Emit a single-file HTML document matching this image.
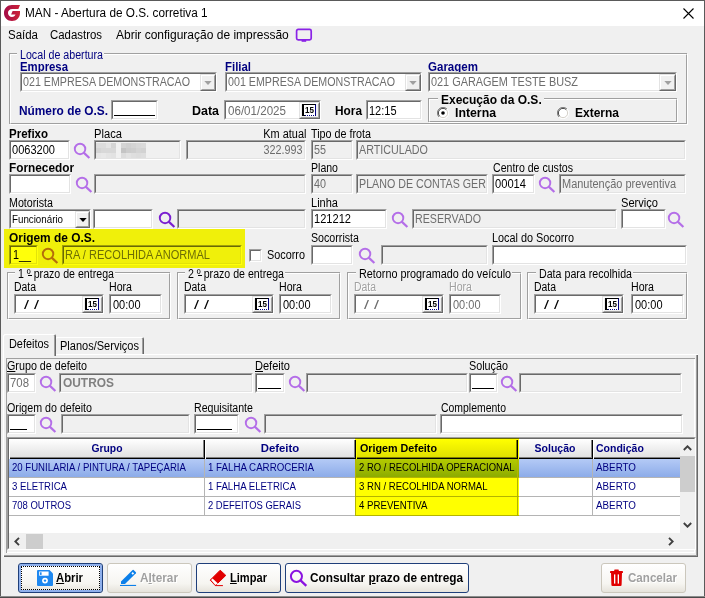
<!DOCTYPE html>
<html lang="pt-BR"><head><meta charset="utf-8"><title>MAN - Abertura de O.S. corretiva 1</title>
<style>
html,body{margin:0;padding:0;background:#f0f0f0;overflow:hidden}
#w{position:relative;width:705px;height:598px;overflow:hidden;font-family:"Liberation Sans",sans-serif;font-size:12px}
#w div,#w svg.a,#w span.t{position:absolute}
#w span.t{white-space:nowrap;transform-origin:0 0;display:block}
#w span.t.r{transform-origin:100% 0}
#w span.t.c{transform-origin:50% 0}
.sk{box-sizing:border-box;border:1px solid;border-color:#a0a0a0 #fff #fff #a0a0a0}
.sk i{position:absolute;left:0;top:0;right:0;bottom:0;border:1px solid;border-color:#696969 #e3e3e3 #e3e3e3 #696969}
.rb{box-sizing:border-box;background:#f0f0f0;border:1px solid;border-color:#e3e3e3 #696969 #696969 #e3e3e3}
.rb i{position:absolute;left:0;top:0;right:0;bottom:0;border:1px solid;border-color:#fff #a0a0a0 #a0a0a0 #fff}
.gb{box-sizing:border-box;border:1px solid #a0a0a0;box-shadow:1px 1px 0 #fff}
.gb i{position:absolute;left:0;top:0;right:-1px;bottom:-1px;border:1px solid;border-color:#fff transparent transparent #fff}
u{text-decoration:underline}
</style></head>
<body><div id="w">
<div style="left:0px;top:0px;width:705px;height:598px;background:#f0f0f0"></div>
<div style="left:0px;top:0px;width:705px;height:26px;background:#fff"></div>
<div style="left:0px;top:0px;width:705px;height:1px;background:#5a5a5a"></div>
<div style="left:0px;top:0px;width:1px;height:598px;background:#5a5a5a"></div>
<div style="left:704px;top:0px;width:1px;height:598px;background:#5a5a5a"></div>
<div style="left:0px;top:596px;width:705px;height:1px;background:#8c8c8c"></div>
<div style="left:0px;top:597px;width:705px;height:1px;background:#4a4a4a"></div>
<svg class="a" style="left:4px;top:5px" width="16" height="16" viewBox="0 0 16 16"><defs><linearGradient id="lg" x1="0" y1="0" x2="1" y2="0"><stop offset="0" stop-color="#a30c48"/><stop offset="1" stop-color="#cc2238"/></linearGradient></defs><path d="M16 0 L14.4 4.1 L8.2 4.1 C5.6 4.1 4 5.8 4 8 C4 10.3 5.7 12 8 12 C9.8 12 11 11.1 11.5 9.6 L7.1 9.6 L8.6 6.1 L16 6.1 L16 8 C16 12.6 12.6 16 8 16 C3.4 16 0 12.6 0 8 C0 3.4 3.4 0 8 0 Z" fill="url(#lg)"/></svg>
<span class="t" id="t0" style="top:6px;font-size:12px;line-height:15px;color:#000;left:25px;transform:scaleX(0.981);">MAN - Abertura de O.S. corretiva 1</span>
<svg class="a" style="left:683px;top:8px" width="11" height="11" viewBox="0 0 11 11"><path d="M0.5 0.5 L10.5 10.5 M10.5 0.5 L0.5 10.5" stroke="#000" stroke-width="1.1"/></svg>
<span class="t" id="t1" style="top:28px;font-size:12px;line-height:15px;color:#000;left:8px;transform:scaleX(0.957);">Saída</span>
<span class="t" id="t2" style="top:28px;font-size:12px;line-height:15px;color:#000;left:50px;transform:scaleX(0.951);">Cadastros</span>
<span class="t" id="t3" style="top:28px;font-size:12px;line-height:15px;color:#000;left:116px;">Abrir configuração de impressão</span>
<svg class="a" style="left:295px;top:28px" width="18" height="15" viewBox="0 0 18 15"><rect x="1.6" y="1.4" width="14.6" height="10.4" rx="1.6" fill="none" stroke="#8a22e6" stroke-width="1.7"/><rect x="6.6" y="12" width="4.6" height="1.8" fill="#8a22e6"/></svg>
<div class="gb" style="left:9px;top:53px;width:678px;height:71px"><i></i></div>
<div style="left:17px;top:52px;width:87px;height:3px;background:#f0f0f0"></div>
<span class="t" id="t4" style="top:49px;font-size:12px;line-height:13px;color:#000080;left:20px;transform:scaleX(0.889);">Local de abertura</span>
<span class="t" id="t5" style="top:61px;font-size:12px;line-height:13px;color:#000080;font-weight:bold;left:20px;transform:scaleX(0.947);">Empresa</span>
<div class="sk" style="left:20px;top:72px;width:197px;height:20px;background:#fff"><i></i></div>
<span class="t" id="t6" style="top:76px;font-size:12px;line-height:13px;color:#6d6d6d;left:23px;transform:scaleX(0.891);">021 EMPRESA DEMONSTRACAO</span>
<div class="rb" style="left:200px;top:74px;width:16px;height:17px"><i></i></div>
<svg class="a" style="left:204.0px;top:80.5px" width="8" height="4" viewBox="0 0 8 4"><path d="M0.3 0 L7.7 0 L4 4 Z" fill="#a0a0a0"/></svg>
<span class="t" id="t7" style="top:61px;font-size:12px;line-height:13px;color:#000080;font-weight:bold;left:225px;transform:scaleX(0.951);">Filial</span>
<div class="sk" style="left:225px;top:72px;width:197px;height:20px;background:#fff"><i></i></div>
<span class="t" id="t8" style="top:76px;font-size:12px;line-height:13px;color:#6d6d6d;left:228px;transform:scaleX(0.891);">001 EMPRESA DEMONSTRACAO</span>
<div class="rb" style="left:405px;top:74px;width:16px;height:17px"><i></i></div>
<svg class="a" style="left:409.0px;top:80.5px" width="8" height="4" viewBox="0 0 8 4"><path d="M0.3 0 L7.7 0 L4 4 Z" fill="#a0a0a0"/></svg>
<span class="t" id="t9" style="top:61px;font-size:12px;line-height:13px;color:#000080;font-weight:bold;left:428px;transform:scaleX(0.961);">Garagem</span>
<div class="sk" style="left:428px;top:72px;width:249px;height:20px;background:#fff"><i></i></div>
<span class="t" id="t10" style="top:76px;font-size:12px;line-height:13px;color:#6d6d6d;left:431px;transform:scaleX(0.908);">021 GARAGEM TESTE BUSZ</span>
<div class="rb" style="left:659px;top:74px;width:17px;height:17px"><i></i></div>
<svg class="a" style="left:663.5px;top:80.5px" width="8" height="4" viewBox="0 0 8 4"><path d="M0.3 0 L7.7 0 L4 4 Z" fill="#a0a0a0"/></svg>
<span class="t" id="t11" style="top:105px;font-size:12px;line-height:13px;color:#000080;font-weight:bold;left:19px;transform:scaleX(0.989);">Número de O.S.</span>
<div class="sk" style="left:111px;top:100px;width:47px;height:20px;background:#fff"><i></i></div>
<div style="left:114px;top:115px;width:41px;height:1px;background:#000"></div>
<span class="t" id="t12" style="top:105px;font-size:12px;line-height:13px;color:#000;font-weight:bold;left:192px;transform:scaleX(1.038);">Data</span>
<div class="sk" style="left:224px;top:100px;width:97px;height:20px;background:#fff"><i></i></div>
<span class="t" id="t13" style="top:105px;font-size:12px;line-height:13px;color:#6d6d6d;left:228px;transform:scaleX(0.966);">06/01/2025</span>
<div class="rb" style="left:299px;top:102px;width:21px;height:17px"><i></i></div>
<div style="left:302px;top:104px;width:14px;height:12px;background:#fff;border-style:solid;border-color:#000 #000080 #000080 #000;border-width:1px 1px 1px 2px;border-bottom-style:dotted;box-sizing:border-box"></div>
<div style="left:302px;top:115px;width:3px;height:1px;background:#000"></div>
<span class="t" id="t14" style="top:104.5px;font-size:9.5px;line-height:10px;color:#000;font-weight:bold;left:305px;transform:scaleX(0.851);">15</span>
<span class="t" id="t15" style="top:105px;font-size:12px;line-height:13px;color:#000;font-weight:bold;left:335px;transform:scaleX(0.987);">Hora</span>
<div class="sk" style="left:366px;top:100px;width:56px;height:20px;background:#fff"><i></i></div>
<span class="t" id="t16" style="top:105px;font-size:12px;line-height:13px;color:#000;left:369px;transform:scaleX(0.916);">12:15</span>
<div class="gb" style="left:428px;top:98px;width:249px;height:24px"><i></i></div>
<div style="left:438px;top:97px;width:106px;height:3px;background:#f0f0f0"></div>
<span class="t" id="t17" style="top:94px;font-size:12px;line-height:13px;color:#000;font-weight:bold;left:441px;">Execução da O.S.</span>
<svg class="a" style="left:437px;top:107px" width="12" height="12" viewBox="0 0 12 12"><circle cx="6" cy="6" r="5.5" fill="#fff"/><path d="M10 2 A5.6 5.6 0 0 0 2 10" fill="none" stroke="#808080" stroke-width="1"/><path d="M9.3 2.7 A4.6 4.6 0 0 0 2.7 9.3" fill="none" stroke="#404040" stroke-width="1"/><path d="M2 10 A5.6 5.6 0 0 0 10 2" fill="none" stroke="#fff" stroke-width="1"/><path d="M2.7 9.3 A4.6 4.6 0 0 0 9.3 2.7" fill="none" stroke="#d4d0c8" stroke-width="1"/><circle cx="6" cy="6" r="1.8" fill="#000"/></svg>
<span class="t" id="t18" style="top:107px;font-size:12px;line-height:13px;color:#000;font-weight:bold;left:455px;transform:scaleX(1.025);">Interna</span>
<svg class="a" style="left:557px;top:107px" width="12" height="12" viewBox="0 0 12 12"><circle cx="6" cy="6" r="5.5" fill="#fff"/><path d="M10 2 A5.6 5.6 0 0 0 2 10" fill="none" stroke="#808080" stroke-width="1"/><path d="M9.3 2.7 A4.6 4.6 0 0 0 2.7 9.3" fill="none" stroke="#404040" stroke-width="1"/><path d="M2 10 A5.6 5.6 0 0 0 10 2" fill="none" stroke="#fff" stroke-width="1"/><path d="M2.7 9.3 A4.6 4.6 0 0 0 9.3 2.7" fill="none" stroke="#d4d0c8" stroke-width="1"/></svg>
<span class="t" id="t19" style="top:107px;font-size:12px;line-height:13px;color:#000;font-weight:bold;left:575px;">Externa</span>
<span class="t" id="t20" style="top:128px;font-size:12px;line-height:13px;color:#000;font-weight:bold;left:9px;transform:scaleX(0.959);">Prefixo</span>
<div class="sk" style="left:9px;top:140px;width:61px;height:20px;background:#fff"><i></i></div>
<span class="t" id="t21" style="top:144px;font-size:12px;line-height:13px;color:#000;left:12px;transform:scaleX(0.920);">0063200</span>
<svg class="a" style="left:73px;top:142px" width="18" height="18" viewBox="0 0 18 18"><circle cx="7.05" cy="6.95" r="5.25" fill="none" stroke="#b46ee8" stroke-width="1.9"/><path d="M10.7 10.6 L16.4 16" stroke="#b46ee8" stroke-width="2.2"/></svg>
<span class="t" id="t22" style="top:128px;font-size:12px;line-height:13px;color:#000;left:94px;transform:scaleX(0.932);">Placa</span>
<div class="sk" style="left:94px;top:140px;width:87px;height:20px;background:#f0f0f0"><i></i></div>
<div style="left:96px;top:143px;width:5px;height:5px;background:#dcdcdc"></div>
<div style="left:101px;top:143px;width:5px;height:5px;background:#dcdcdc"></div>
<div style="left:106px;top:143px;width:5px;height:5px;background:#e4e4e4"></div>
<div style="left:111px;top:143px;width:5px;height:5px;background:#d4d4d4"></div>
<div style="left:96px;top:148px;width:5px;height:5px;background:#d4d4d4"></div>
<div style="left:101px;top:148px;width:5px;height:5px;background:#d8d8d8"></div>
<div style="left:106px;top:148px;width:5px;height:5px;background:#d8d8d8"></div>
<div style="left:111px;top:148px;width:5px;height:5px;background:#d8d8d8"></div>
<div style="left:96px;top:153px;width:5px;height:5px;background:#e6e6e6"></div>
<div style="left:101px;top:153px;width:5px;height:5px;background:#e8e8e8"></div>
<div style="left:106px;top:153px;width:5px;height:5px;background:#e4e4e4"></div>
<div style="left:111px;top:153px;width:5px;height:5px;background:#e2e2e2"></div>
<div style="left:121px;top:143px;width:5px;height:5px;background:#d4d4d4"></div>
<div style="left:126px;top:143px;width:5px;height:5px;background:#d0d0d0"></div>
<div style="left:131px;top:143px;width:5px;height:5px;background:#d4d4d4"></div>
<div style="left:136px;top:143px;width:5px;height:5px;background:#d8d8d8"></div>
<div style="left:141px;top:143px;width:5px;height:5px;background:#dadada"></div>
<div style="left:121px;top:148px;width:5px;height:5px;background:#c4c4c4"></div>
<div style="left:126px;top:148px;width:5px;height:5px;background:#cccccc"></div>
<div style="left:131px;top:148px;width:5px;height:5px;background:#cecece"></div>
<div style="left:136px;top:148px;width:5px;height:5px;background:#d4d4d4"></div>
<div style="left:141px;top:148px;width:5px;height:5px;background:#d2d2d2"></div>
<div style="left:121px;top:153px;width:5px;height:5px;background:#dcdcdc"></div>
<div style="left:126px;top:153px;width:5px;height:5px;background:#e2e2e2"></div>
<div style="left:131px;top:153px;width:5px;height:5px;background:#dedede"></div>
<div style="left:136px;top:153px;width:5px;height:5px;background:#dcdcdc"></div>
<div style="left:141px;top:153px;width:5px;height:5px;background:#dedede"></div>
<span class="t r" id="t23" style="top:128px;font-size:12px;line-height:13px;color:#000;right:399px;transform:scaleX(0.908);">Km atual</span>
<div class="sk" style="left:186px;top:140px;width:120px;height:20px;background:#f0f0f0"><i></i></div>
<span class="t r" id="t24" style="top:144px;font-size:12px;line-height:13px;color:#6d6d6d;right:403px;transform:scaleX(0.899);">322.993</span>
<span class="t" id="t25" style="top:128px;font-size:12px;line-height:13px;color:#000;left:310.5px;transform:scaleX(0.896);">Tipo de frota</span>
<div class="sk" style="left:311px;top:140px;width:42px;height:20px;background:#f0f0f0"><i></i></div>
<span class="t" id="t26" style="top:144px;font-size:12px;line-height:13px;color:#6d6d6d;left:314px;transform:scaleX(0.898);">55</span>
<div class="sk" style="left:356px;top:140px;width:330px;height:20px;background:#f0f0f0"><i></i></div>
<span class="t" id="t27" style="top:144px;font-size:12px;line-height:13px;color:#6d6d6d;left:359px;transform:scaleX(0.894);">ARTICULADO</span>
<span class="t" id="t28" style="top:162px;font-size:12px;line-height:13px;color:#000;font-weight:bold;left:9px;transform:scaleX(0.985);">Fornecedor</span>
<div class="sk" style="left:9px;top:174px;width:62px;height:20px;background:#fff"><i></i></div>
<svg class="a" style="left:75px;top:176px" width="18" height="18" viewBox="0 0 18 18"><circle cx="7.05" cy="6.95" r="5.25" fill="none" stroke="#b46ee8" stroke-width="1.9"/><path d="M10.7 10.6 L16.4 16" stroke="#b46ee8" stroke-width="2.2"/></svg>
<div class="sk" style="left:94px;top:174px;width:212px;height:20px;background:#f0f0f0"><i></i></div>
<span class="t" id="t29" style="top:162px;font-size:12px;line-height:13px;color:#000;left:310.5px;transform:scaleX(0.879);">Plano</span>
<div class="sk" style="left:311px;top:174px;width:42px;height:20px;background:#f0f0f0"><i></i></div>
<span class="t" id="t30" style="top:178px;font-size:12px;line-height:13px;color:#6d6d6d;left:314px;transform:scaleX(0.898);">40</span>
<div class="sk" style="left:356px;top:174px;width:132px;height:20px;background:#f0f0f0"><i></i></div>
<span class="t" id="t31" style="top:178px;font-size:12px;line-height:13px;color:#6d6d6d;left:359px;transform:scaleX(0.891);">PLANO DE CONTAS GER</span>
<span class="t" id="t32" style="top:162px;font-size:12px;line-height:13px;color:#000;left:492.5px;transform:scaleX(0.882);">Centro de custos</span>
<div class="sk" style="left:492px;top:174px;width:43px;height:20px;background:#fff"><i></i></div>
<span class="t" id="t33" style="top:178px;font-size:12px;line-height:13px;color:#000;left:495px;transform:scaleX(0.929);">00014</span>
<svg class="a" style="left:538px;top:176px" width="18" height="18" viewBox="0 0 18 18"><circle cx="7.05" cy="6.95" r="5.25" fill="none" stroke="#b46ee8" stroke-width="1.9"/><path d="M10.7 10.6 L16.4 16" stroke="#b46ee8" stroke-width="2.2"/></svg>
<div class="sk" style="left:559px;top:174px;width:127px;height:20px;background:#f0f0f0"><i></i></div>
<span class="t" id="t34" style="top:178px;font-size:12px;line-height:13px;color:#6d6d6d;left:562px;transform:scaleX(0.914);">Manutenção preventiva</span>
<span class="t" id="t35" style="top:197px;font-size:12px;line-height:13px;color:#000;left:9px;transform:scaleX(0.891);">Motorista</span>
<div class="sk" style="left:9px;top:209px;width:82px;height:20px;background:#fff"><i></i></div>
<span class="t" id="t36" style="top:213px;font-size:10.5px;line-height:13px;color:#000;left:12px;transform:scaleX(0.929);">Funcionário</span>
<div class="rb" style="left:75px;top:211px;width:15px;height:17px"><i></i></div>
<svg class="a" style="left:78.5px;top:217.5px" width="8" height="4" viewBox="0 0 8 4"><path d="M0.3 0 L7.7 0 L4 4 Z" fill="#000"/></svg>
<div class="sk" style="left:93px;top:209px;width:60px;height:20px;background:#fff"><i></i></div>
<svg class="a" style="left:158px;top:211px" width="18" height="18" viewBox="0 0 18 18"><circle cx="7.05" cy="6.95" r="5.25" fill="none" stroke="#7a1fd0" stroke-width="1.9"/><path d="M10.7 10.6 L16.4 16" stroke="#7a1fd0" stroke-width="2.2"/></svg>
<div class="sk" style="left:177px;top:209px;width:129px;height:20px;background:#f0f0f0"><i></i></div>
<span class="t" id="t37" style="top:197px;font-size:12px;line-height:13px;color:#000;left:311px;transform:scaleX(0.919);">Linha</span>
<div class="sk" style="left:311px;top:209px;width:76px;height:20px;background:#fff"><i></i></div>
<span class="t" id="t38" style="top:213px;font-size:12px;line-height:13px;color:#000;left:314px;transform:scaleX(0.924);">121212</span>
<svg class="a" style="left:391px;top:211px" width="18" height="18" viewBox="0 0 18 18"><circle cx="7.05" cy="6.95" r="5.25" fill="none" stroke="#b46ee8" stroke-width="1.9"/><path d="M10.7 10.6 L16.4 16" stroke="#b46ee8" stroke-width="2.2"/></svg>
<div class="sk" style="left:412px;top:209px;width:205px;height:20px;background:#f0f0f0"><i></i></div>
<span class="t" id="t39" style="top:213px;font-size:12px;line-height:13px;color:#6d6d6d;left:415px;transform:scaleX(0.889);">RESERVADO</span>
<span class="t" id="t40" style="top:197px;font-size:12px;line-height:13px;color:#000;left:621px;transform:scaleX(0.925);">Serviço</span>
<div class="sk" style="left:621px;top:209px;width:45px;height:20px;background:#fff"><i></i></div>
<svg class="a" style="left:667px;top:211px" width="18" height="18" viewBox="0 0 18 18"><circle cx="7.05" cy="6.95" r="5.25" fill="none" stroke="#b46ee8" stroke-width="1.9"/><path d="M10.7 10.6 L16.4 16" stroke="#b46ee8" stroke-width="2.2"/></svg>
<span class="t" id="t41" style="top:232px;font-size:12px;line-height:13px;color:#000;font-weight:bold;left:9px;transform:scaleX(0.992);">Origem de O.S.</span>
<div class="sk" style="left:9px;top:245px;width:29px;height:20px;background:#fff"><i></i></div>
<span class="t" id="t42" style="top:249px;font-size:12px;line-height:13px;color:#000;left:13px;transform:scaleX(0.899);">1__</span>
<svg class="a" style="left:41px;top:246.5px" width="18" height="18" viewBox="0 0 18 18"><circle cx="7.05" cy="6.95" r="5.25" fill="none" stroke="#b46ee8" stroke-width="1.9"/><path d="M10.7 10.6 L16.4 16" stroke="#b46ee8" stroke-width="2.2"/></svg>
<div class="sk" style="left:62px;top:245px;width:180px;height:20px;background:#f0f0f0"><i></i></div>
<span class="t" id="t43" style="top:249px;font-size:12px;line-height:13px;color:#6d6d6d;left:65px;transform:scaleX(0.921);">RA / RECOLHIDA ANORMAL</span>
<div class="sk" style="left:249px;top:249px;width:13px;height:13px;background:#fff"><i></i></div>
<span class="t" id="t44" style="top:249px;font-size:12px;line-height:13px;color:#000;left:267px;transform:scaleX(0.904);">Socorro</span>
<span class="t" id="t45" style="top:232px;font-size:12px;line-height:13px;color:#000;left:311px;transform:scaleX(0.888);">Socorrista</span>
<div class="sk" style="left:311px;top:245px;width:42px;height:20px;background:#fff"><i></i></div>
<svg class="a" style="left:358px;top:246.5px" width="18" height="18" viewBox="0 0 18 18"><circle cx="7.05" cy="6.95" r="5.25" fill="none" stroke="#b46ee8" stroke-width="1.9"/><path d="M10.7 10.6 L16.4 16" stroke="#b46ee8" stroke-width="2.2"/></svg>
<div class="sk" style="left:381px;top:245px;width:107px;height:20px;background:#f0f0f0"><i></i></div>
<span class="t" id="t46" style="top:232px;font-size:12px;line-height:13px;color:#000;left:492px;transform:scaleX(0.904);">Local do Socorro</span>
<div class="sk" style="left:492px;top:245px;width:195px;height:20px;background:#fff"><i></i></div>
<div class="gb" style="left:7px;top:272px;width:163px;height:47px"><i></i></div>
<div style="left:15px;top:271px;width:100px;height:3px;background:#f0f0f0"></div>
<span class="t" id="t47" style="top:268px;font-size:12px;line-height:13px;color:#000;left:18px;transform:scaleX(0.885);">1 º prazo de entrega</span>
<span class="t" id="t48" style="top:281px;font-size:12px;line-height:13px;color:#000;left:14px;transform:scaleX(0.868);">Data</span>
<div class="sk" style="left:14px;top:294px;width:90px;height:20px;background:#fff"><i></i></div>
<span class="t" id="t49" style="top:299px;font-size:12px;line-height:13px;color:#000;left:24px;transform:scaleX(1.498);">/ /</span>
<div class="rb" style="left:82px;top:296px;width:21px;height:17px"><i></i></div>
<div style="left:85px;top:298px;width:14px;height:12px;background:#fff;border-style:solid;border-color:#000 #000080 #000080 #000;border-width:1px 1px 1px 2px;border-bottom-style:dotted;box-sizing:border-box"></div>
<div style="left:85px;top:309px;width:3px;height:1px;background:#000"></div>
<span class="t" id="t50" style="top:298.5px;font-size:9.5px;line-height:10px;color:#000;font-weight:bold;left:88px;transform:scaleX(0.851);">15</span>
<span class="t" id="t51" style="top:281px;font-size:12px;line-height:13px;color:#000;left:109px;transform:scaleX(0.884);">Hora</span>
<div class="sk" style="left:109px;top:294px;width:53px;height:20px;background:#fff"><i></i></div>
<span class="t" id="t52" style="top:299px;font-size:12px;line-height:13px;color:#000;left:113px;transform:scaleX(0.916);">00:00</span>
<div class="gb" style="left:177px;top:272px;width:163px;height:47px"><i></i></div>
<div style="left:185px;top:271px;width:100px;height:3px;background:#f0f0f0"></div>
<span class="t" id="t53" style="top:268px;font-size:12px;line-height:13px;color:#000;left:188px;transform:scaleX(0.885);">2 º prazo de entrega</span>
<span class="t" id="t54" style="top:281px;font-size:12px;line-height:13px;color:#000;left:184px;transform:scaleX(0.868);">Data</span>
<div class="sk" style="left:184px;top:294px;width:90px;height:20px;background:#fff"><i></i></div>
<span class="t" id="t55" style="top:299px;font-size:12px;line-height:13px;color:#000;left:194px;transform:scaleX(1.498);">/ /</span>
<div class="rb" style="left:252px;top:296px;width:21px;height:17px"><i></i></div>
<div style="left:255px;top:298px;width:14px;height:12px;background:#fff;border-style:solid;border-color:#000 #000080 #000080 #000;border-width:1px 1px 1px 2px;border-bottom-style:dotted;box-sizing:border-box"></div>
<div style="left:255px;top:309px;width:3px;height:1px;background:#000"></div>
<span class="t" id="t56" style="top:298.5px;font-size:9.5px;line-height:10px;color:#000;font-weight:bold;left:258px;transform:scaleX(0.851);">15</span>
<span class="t" id="t57" style="top:281px;font-size:12px;line-height:13px;color:#000;left:279px;transform:scaleX(0.884);">Hora</span>
<div class="sk" style="left:279px;top:294px;width:53px;height:20px;background:#fff"><i></i></div>
<span class="t" id="t58" style="top:299px;font-size:12px;line-height:13px;color:#000;left:283px;transform:scaleX(0.916);">00:00</span>
<div style="left:28px;top:274.5px;width:3.5px;height:1px;background:#000"></div>
<div style="left:198px;top:274.5px;width:3.5px;height:1px;background:#000"></div>
<div class="gb" style="left:347px;top:272px;width:174px;height:47px"><i></i></div>
<div style="left:356px;top:271px;width:156px;height:3px;background:#f0f0f0"></div>
<span class="t" id="t59" style="top:268px;font-size:12px;line-height:13px;color:#000;left:359px;transform:scaleX(0.901);">Retorno programado do veículo</span>
<span class="t" id="t60" style="top:281px;font-size:12px;line-height:13px;color:#a0a0a0;text-shadow:1px 1px 0 #fff;left:354px;transform:scaleX(0.868);">Data</span>
<div class="sk" style="left:354px;top:294px;width:90px;height:20px;background:#fff"><i></i></div>
<span class="t" id="t61" style="top:299px;font-size:12px;line-height:13px;color:#6d6d6d;left:364px;transform:scaleX(1.498);">/ /</span>
<div class="rb" style="left:422px;top:296px;width:21px;height:17px"><i></i></div>
<div style="left:425px;top:298px;width:14px;height:12px;background:#fff;border-style:solid;border-color:#000 #000080 #000080 #000;border-width:1px 1px 1px 2px;border-bottom-style:dotted;box-sizing:border-box"></div>
<div style="left:425px;top:309px;width:3px;height:1px;background:#000"></div>
<span class="t" id="t62" style="top:298.5px;font-size:9.5px;line-height:10px;color:#000;font-weight:bold;left:428px;transform:scaleX(0.851);">15</span>
<span class="t" id="t63" style="top:281px;font-size:12px;line-height:13px;color:#a0a0a0;text-shadow:1px 1px 0 #fff;left:449px;transform:scaleX(0.884);">Hora</span>
<div class="sk" style="left:449px;top:294px;width:52px;height:20px;background:#fff"><i></i></div>
<span class="t" id="t64" style="top:299px;font-size:12px;line-height:13px;color:#6d6d6d;left:453px;transform:scaleX(0.916);">00:00</span>
<div class="gb" style="left:527px;top:272px;width:160px;height:47px"><i></i></div>
<div style="left:536px;top:271px;width:97px;height:3px;background:#f0f0f0"></div>
<span class="t" id="t65" style="top:268px;font-size:12px;line-height:13px;color:#000;left:539px;transform:scaleX(0.888);">Data para recolhida</span>
<span class="t" id="t66" style="top:281px;font-size:12px;line-height:13px;color:#000;left:534px;transform:scaleX(0.868);">Data</span>
<div class="sk" style="left:534px;top:294px;width:90px;height:20px;background:#fff"><i></i></div>
<span class="t" id="t67" style="top:299px;font-size:12px;line-height:13px;color:#000;left:544px;transform:scaleX(1.498);">/ /</span>
<div class="rb" style="left:602px;top:296px;width:21px;height:17px"><i></i></div>
<div style="left:605px;top:298px;width:14px;height:12px;background:#fff;border-style:solid;border-color:#000 #000080 #000080 #000;border-width:1px 1px 1px 2px;border-bottom-style:dotted;box-sizing:border-box"></div>
<div style="left:605px;top:309px;width:3px;height:1px;background:#000"></div>
<span class="t" id="t68" style="top:298.5px;font-size:9.5px;line-height:10px;color:#000;font-weight:bold;left:608px;transform:scaleX(0.851);">15</span>
<span class="t" id="t69" style="top:281px;font-size:12px;line-height:13px;color:#000;left:631px;transform:scaleX(0.884);">Hora</span>
<div class="sk" style="left:631px;top:294px;width:53px;height:20px;background:#fff"><i></i></div>
<span class="t" id="t70" style="top:299px;font-size:12px;line-height:13px;color:#000;left:635px;transform:scaleX(0.916);">00:00</span>
<div style="left:3px;top:354px;width:695px;height:203px;background:#f0f0f0;box-shadow:inset 1px 1px 0 #fff, inset -1px -1px 0 #696969, inset -2px -2px 0 #a0a0a0"></div>
<div style="left:55px;top:337px;width:89px;height:18px;background:#f0f0f0;box-shadow:inset 1px 1px 0 #fff, inset -1px 0 0 #696969, inset -2px 0 0 #a0a0a0;border-radius:2px 2px 0 0"></div>
<div style="left:55px;top:354px;width:89px;height:1px;background:#fff"></div>
<span class="t" id="t71" style="top:340px;font-size:12px;line-height:13px;color:#000;left:60px;transform:scaleX(0.918);">Planos/Serviços</span>
<div style="left:3px;top:334px;width:53px;height:22px;background:#f0f0f0;box-shadow:inset 1px 1px 0 #fff, inset -1px 0 0 #696969, inset -2px 0 0 #a0a0a0;border-radius:2px 2px 0 0"></div>
<span class="t" id="t72" style="top:338px;font-size:12px;line-height:13px;color:#000;left:9px;transform:scaleX(0.908);">Defeitos</span>
<div style="left:6px;top:358px;width:689px;height:195px;box-shadow:inset 1px 1px 0 #a0a0a0, inset -1px -1px 0 #fff"></div>
<span class="t" id="t73" style="top:360px;font-size:12px;line-height:13px;color:#000;left:7px;transform:scaleX(0.895);"><u>G</u>rupo de defeito</span>
<div class="sk" style="left:7px;top:373px;width:29px;height:20px;background:#fff"><i></i></div>
<span class="t" id="t74" style="top:377px;font-size:12px;line-height:13px;color:#6d6d6d;left:10px;transform:scaleX(0.949);">708</span>
<svg class="a" style="left:39px;top:375px" width="18" height="18" viewBox="0 0 18 18"><circle cx="7.05" cy="6.95" r="5.25" fill="none" stroke="#b46ee8" stroke-width="1.9"/><path d="M10.7 10.6 L16.4 16" stroke="#b46ee8" stroke-width="2.2"/></svg>
<div class="sk" style="left:59px;top:373px;width:194px;height:20px;background:#f0f0f0"><i></i></div>
<span class="t" id="t75" style="top:377px;font-size:12px;line-height:13px;color:#808080;font-weight:bold;left:63px;transform:scaleX(0.993);">OUTROS</span>
<span class="t" id="t76" style="top:360px;font-size:12px;line-height:13px;color:#000;left:255px;transform:scaleX(0.920);"><u>D</u>efeito</span>
<div class="sk" style="left:255px;top:373px;width:30px;height:20px;background:#fff"><i></i></div>
<div style="left:258px;top:388px;width:23px;height:1px;background:#000"></div>
<svg class="a" style="left:287.5px;top:375px" width="18" height="18" viewBox="0 0 18 18"><circle cx="7.05" cy="6.95" r="5.25" fill="none" stroke="#b46ee8" stroke-width="1.9"/><path d="M10.7 10.6 L16.4 16" stroke="#b46ee8" stroke-width="2.2"/></svg>
<div class="sk" style="left:306px;top:373px;width:162px;height:20px;background:#f0f0f0"><i></i></div>
<span class="t" id="t77" style="top:360px;font-size:12px;line-height:13px;color:#000;left:469px;transform:scaleX(0.899);">Solução</span>
<div class="sk" style="left:469px;top:373px;width:29px;height:20px;background:#fff"><i></i></div>
<div style="left:472px;top:388px;width:22px;height:1px;background:#000"></div>
<svg class="a" style="left:500px;top:375px" width="18" height="18" viewBox="0 0 18 18"><circle cx="7.05" cy="6.95" r="5.25" fill="none" stroke="#b46ee8" stroke-width="1.9"/><path d="M10.7 10.6 L16.4 16" stroke="#b46ee8" stroke-width="2.2"/></svg>
<div class="sk" style="left:519px;top:373px;width:163px;height:20px;background:#f0f0f0"><i></i></div>
<span class="t" id="t78" style="top:402px;font-size:12px;line-height:13px;color:#000;left:7px;transform:scaleX(0.891);">Origem do defeito</span>
<div class="sk" style="left:7px;top:414px;width:29px;height:20px;background:#fff"><i></i></div>
<div style="left:10px;top:429px;width:17px;height:1px;background:#000"></div>
<svg class="a" style="left:39px;top:416px" width="18" height="18" viewBox="0 0 18 18"><circle cx="7.05" cy="6.95" r="5.25" fill="none" stroke="#b46ee8" stroke-width="1.9"/><path d="M10.7 10.6 L16.4 16" stroke="#b46ee8" stroke-width="2.2"/></svg>
<div class="sk" style="left:61px;top:414px;width:129px;height:20px;background:#f0f0f0"><i></i></div>
<span class="t" id="t79" style="top:402px;font-size:12px;line-height:13px;color:#000;left:194px;transform:scaleX(0.884);">Requisitante</span>
<div class="sk" style="left:194px;top:414px;width:45px;height:20px;background:#fff"><i></i></div>
<div style="left:197px;top:429px;width:35px;height:1px;background:#000"></div>
<svg class="a" style="left:244px;top:416px" width="18" height="18" viewBox="0 0 18 18"><circle cx="7.05" cy="6.95" r="5.25" fill="none" stroke="#b46ee8" stroke-width="1.9"/><path d="M10.7 10.6 L16.4 16" stroke="#b46ee8" stroke-width="2.2"/></svg>
<div class="sk" style="left:264px;top:414px;width:173px;height:20px;background:#f0f0f0"><i></i></div>
<span class="t" id="t80" style="top:402px;font-size:12px;line-height:13px;color:#000;left:441px;transform:scaleX(0.870);">Complemento</span>
<div class="sk" style="left:440px;top:414px;width:243px;height:20px;background:#fff"><i></i></div>
<div class="sk" style="left:7px;top:437px;width:689px;height:113px;background:#fff"><i></i></div>
<div style="left:9px;top:439px;width:196px;height:20px;background:linear-gradient(#fff,#dedede);box-shadow:inset 1px 1px 0 #fff, inset -1px -1px 0 #000, inset -2px -2px 0 #808080"></div>
<div style="left:205px;top:439px;width:151px;height:20px;background:linear-gradient(#fff,#dedede);box-shadow:inset 1px 1px 0 #fff, inset -1px -1px 0 #000, inset -2px -2px 0 #808080"></div>
<div style="left:356px;top:439px;width:162px;height:20px;background:linear-gradient(#fff,#dedede);box-shadow:inset 1px 1px 0 #fff, inset -1px -1px 0 #000, inset -2px -2px 0 #808080"></div>
<div style="left:518px;top:439px;width:75px;height:20px;background:linear-gradient(#fff,#dedede);box-shadow:inset 1px 1px 0 #fff, inset -1px -1px 0 #000, inset -2px -2px 0 #808080"></div>
<div style="left:593px;top:439px;width:87px;height:20px;background:linear-gradient(#fff,#dedede);box-shadow:inset 1px 1px 0 #fff, inset 0 -1px 0 #000, inset 0 -2px 0 #808080"></div>
<span class="t c" id="t81" style="top:442px;font-size:10.5px;line-height:13px;color:#000080;font-weight:bold;left:-43px;width:300px;text-align:center;transform:scaleX(0.984);">Grupo</span>
<span class="t c" id="t82" style="top:442px;font-size:10.5px;line-height:13px;color:#000080;font-weight:bold;left:130px;width:300px;text-align:center;transform:scaleX(1.082);">Defeito</span>
<span class="t" id="t83" style="top:442px;font-size:10.5px;line-height:13px;color:#000080;font-weight:bold;left:360px;transform:scaleX(1.023);">Origem Defeito</span>
<span class="t c" id="t84" style="top:442px;font-size:10.5px;line-height:13px;color:#000080;font-weight:bold;left:405px;width:300px;text-align:center;">Solução</span>
<span class="t" id="t85" style="top:442px;font-size:10.5px;line-height:13px;color:#000080;font-weight:bold;left:596px;">Condição</span>
<div style="left:9px;top:459px;width:671px;height:19px;background:linear-gradient(#b4caf6,#8aaae8)"></div>
<div style="left:9px;top:477px;width:671px;height:1px;background:#b4b4b4"></div>
<div style="left:204px;top:459px;width:1px;height:19px;background:#b4b4b4"></div>
<div style="left:355px;top:459px;width:1px;height:19px;background:#b4b4b4"></div>
<div style="left:517px;top:459px;width:1px;height:19px;background:#b4b4b4"></div>
<div style="left:592px;top:459px;width:1px;height:19px;background:#b4b4b4"></div>
<span class="t" id="t86" style="top:461px;font-size:10px;line-height:13px;color:#000080;left:11.5px;transform:scaleX(0.959);">20 FUNILARIA / PINTURA / TAPEÇARIA</span>
<span class="t" id="t87" style="top:461px;font-size:10px;line-height:13px;color:#000080;left:207.5px;transform:scaleX(0.973);">1 FALHA CARROCERIA</span>
<span class="t" id="t88" style="top:461px;font-size:10px;line-height:13px;color:#000080;left:358.5px;transform:scaleX(0.945);">2 RO / RECOLHIDA OPERACIONAL</span>
<span class="t" id="t89" style="top:461px;font-size:10px;line-height:13px;color:#000080;left:596px;transform:scaleX(0.981);">ABERTO</span>
<div style="left:9px;top:496px;width:671px;height:1px;background:#b4b4b4"></div>
<div style="left:204px;top:478px;width:1px;height:19px;background:#b4b4b4"></div>
<div style="left:355px;top:478px;width:1px;height:19px;background:#b4b4b4"></div>
<div style="left:517px;top:478px;width:1px;height:19px;background:#b4b4b4"></div>
<div style="left:592px;top:478px;width:1px;height:19px;background:#b4b4b4"></div>
<span class="t" id="t90" style="top:480px;font-size:10px;line-height:13px;color:#000080;left:11.5px;transform:scaleX(0.961);">3 ELETRICA</span>
<span class="t" id="t91" style="top:480px;font-size:10px;line-height:13px;color:#000080;left:207.5px;transform:scaleX(0.965);">1 FALHA ELETRICA</span>
<span class="t" id="t92" style="top:480px;font-size:10px;line-height:13px;color:#000080;left:358.5px;transform:scaleX(0.956);">3 RN / RECOLHIDA NORMAL</span>
<span class="t" id="t93" style="top:480px;font-size:10px;line-height:13px;color:#000080;left:596px;transform:scaleX(0.981);">ABERTO</span>
<div style="left:9px;top:515px;width:671px;height:1px;background:#b4b4b4"></div>
<div style="left:204px;top:497px;width:1px;height:19px;background:#b4b4b4"></div>
<div style="left:355px;top:497px;width:1px;height:19px;background:#b4b4b4"></div>
<div style="left:517px;top:497px;width:1px;height:19px;background:#b4b4b4"></div>
<div style="left:592px;top:497px;width:1px;height:19px;background:#b4b4b4"></div>
<span class="t" id="t94" style="top:499px;font-size:10px;line-height:13px;color:#000080;left:11.5px;transform:scaleX(0.948);">708 OUTROS</span>
<span class="t" id="t95" style="top:499px;font-size:10px;line-height:13px;color:#000080;left:207.5px;transform:scaleX(0.942);">2 DEFEITOS GERAIS</span>
<span class="t" id="t96" style="top:499px;font-size:10px;line-height:13px;color:#000080;left:358.5px;transform:scaleX(0.965);">4 PREVENTIVA</span>
<span class="t" id="t97" style="top:499px;font-size:10px;line-height:13px;color:#000080;left:596px;transform:scaleX(0.981);">ABERTO</span>
<div style="left:680px;top:439px;width:15px;height:94px;background:#f0f0f0"></div>
<div style="left:680px;top:456px;width:15px;height:36px;background:#cdcdcd"></div>
<svg class="a" style="left:683px;top:445px" width="9" height="6" viewBox="0 0 9 6"><path d="M0.8 5 L4.5 1.3 L8.2 5" fill="none" stroke="#404040" stroke-width="1.9"/></svg>
<svg class="a" style="left:683px;top:522px" width="9" height="6" viewBox="0 0 9 6"><path d="M0.8 1 L4.5 4.7 L8.2 1" fill="none" stroke="#404040" stroke-width="1.9"/></svg>
<div style="left:9px;top:533px;width:686px;height:16px;background:#f0f0f0"></div>
<div style="left:26px;top:534px;width:17px;height:15px;background:#cdcdcd"></div>
<svg class="a" style="left:14px;top:537px" width="6" height="9" viewBox="0 0 6 9"><path d="M5 0.8 L1.3 4.5 L5 8.2" fill="none" stroke="#404040" stroke-width="1.9"/></svg>
<svg class="a" style="left:668px;top:537px" width="6" height="9" viewBox="0 0 6 9"><path d="M1 0.8 L4.7 4.5 L1 8.2" fill="none" stroke="#404040" stroke-width="1.9"/></svg>
<div style="left:18px;top:563px;width:85px;height:30px;background:linear-gradient(#fff,#f6f5f1 70%,#e6e3db);border:1px solid #1f3f7a;border-radius:3px;box-sizing:border-box;box-shadow:inset 0 0 0 2px #8fb0ec"></div>
<div style="left:21px;top:566px;width:79px;height:24px;border:1px dotted #000;box-sizing:border-box"></div>
<span class="t" id="t98" style="top:572px;font-size:12px;line-height:13px;color:#000;font-weight:bold;left:56px;transform:scaleX(0.941);"><u>A</u>brir</span>
<svg class="a" style="left:37px;top:570px" width="16" height="16" viewBox="0 0 16 16"><path d="M1 0 H12.5 L16 3.5 V15 Q16 16 15 16 H1 Q0 16 0 15 V1 Q0 0 1 0 Z" fill="#1e88f0"/><rect x="2.2" y="1.5" width="9.4" height="4.2" fill="#fff"/><rect x="3" y="2.3" width="1.6" height="2.6" fill="#1e88f0"/><circle cx="8" cy="10.6" r="2.9" fill="#fff"/><circle cx="8" cy="10.6" r="1.2" fill="#1e88f0"/></svg>
<div style="left:107px;top:563px;width:85px;height:30px;background:linear-gradient(#fff,#f6f5f1 70%,#e6e3db);border:1px solid #cbc7bc;border-radius:3px;box-sizing:border-box"></div>
<span class="t" id="t99" style="top:572px;font-size:12px;line-height:13px;color:#a0a0a0;font-weight:bold;text-shadow:1px 1px 0 #fff;left:140px;transform:scaleX(0.982);">A<u>l</u>terar</span>
<svg class="a" style="left:119px;top:569px" width="18" height="18" viewBox="0 0 18 18"><path d="M13.6 0.9 Q14.1 0.5 14.6 0.9 L16.9 3.2 Q17.3 3.7 16.9 4.2 L6 15 L2 15 L2 12.4 Z" fill="#0c7fe9"/><rect x="12.8" y="3.5" width="1.9" height="1.9" fill="#fff" transform="rotate(45 13.75 4.45)"/><rect x="1" y="15.9" width="16.1" height="1.1" fill="#0c7fe9"/></svg>
<div style="left:196px;top:563px;width:85px;height:30px;background:linear-gradient(#fff,#f6f5f1 70%,#e6e3db);border:1px solid #1f3f7a;border-radius:3px;box-sizing:border-box"></div>
<span class="t" id="t100" style="top:572px;font-size:12px;line-height:13px;color:#000;font-weight:bold;left:230px;transform:scaleX(0.924);"><u>L</u>impar</span>
<svg class="a" style="left:209px;top:569px" width="19" height="18" viewBox="0 0 19 18"><path d="M11.2 1.2 L16.8 6.4 L6.3 16.6 L1.3 11.1 Z" fill="#e10000" stroke="#e10000" stroke-width="1" stroke-linejoin="round"/><path d="M3.6 9.5 L8.9 14.5 L6.4 16 L2 11.1 Z" fill="#fff"/><rect x="6.3" y="16.1" width="7.6" height="1" fill="#e10000"/></svg>
<div style="left:285px;top:563px;width:184px;height:30px;background:linear-gradient(#fff,#f6f5f1 70%,#e6e3db);border:1px solid #1f3f7a;border-radius:3px;box-sizing:border-box"></div>
<span class="t" id="t101" style="top:572px;font-size:12px;line-height:13px;color:#000;font-weight:bold;left:310px;transform:scaleX(0.985);">Consultar <u>p</u>razo de entrega</span>
<svg class="a" style="left:289px;top:569px" width="19" height="19" viewBox="0 0 18 18"><circle cx="7.05" cy="6.95" r="5.25" fill="none" stroke="#8a12e0" stroke-width="1.9"/><path d="M10.7 10.6 L16.4 16" stroke="#8a12e0" stroke-width="2.2"/></svg>
<div style="left:601px;top:563px;width:85px;height:30px;background:linear-gradient(#fff,#f6f5f1 70%,#e6e3db);border:1px solid #cbc7bc;border-radius:3px;box-sizing:border-box"></div>
<span class="t" id="t102" style="top:572px;font-size:12px;line-height:13px;color:#a0a0a0;font-weight:bold;text-shadow:1px 1px 0 #fff;left:628px;transform:scaleX(0.966);">Cancelar</span>
<svg class="a" style="left:610px;top:569px" width="13" height="17" viewBox="0 0 13 17"><rect x="0" y="2" width="13" height="2" rx="0.4" fill="#e10000"/><rect x="4.2" y="0.5" width="4.6" height="2" rx="0.6" fill="#e10000"/><path d="M1 4 H12 L11.6 16 Q11.5 17 10.5 17 H2.5 Q1.5 17 1.4 16 Z" fill="#e10000"/><rect x="4" y="5.4" width="1.3" height="9.2" fill="#fff"/><rect x="7.7" y="5.4" width="1.3" height="9.2" fill="#fff"/></svg>
<div style="left:4px;top:229px;width:241px;height:39px;background:#ffff0a;mix-blend-mode:multiply"></div>
<div style="left:355px;top:438px;width:164px;height:77.5px;background:#ffff00;mix-blend-mode:multiply"></div>
</div></body></html>
